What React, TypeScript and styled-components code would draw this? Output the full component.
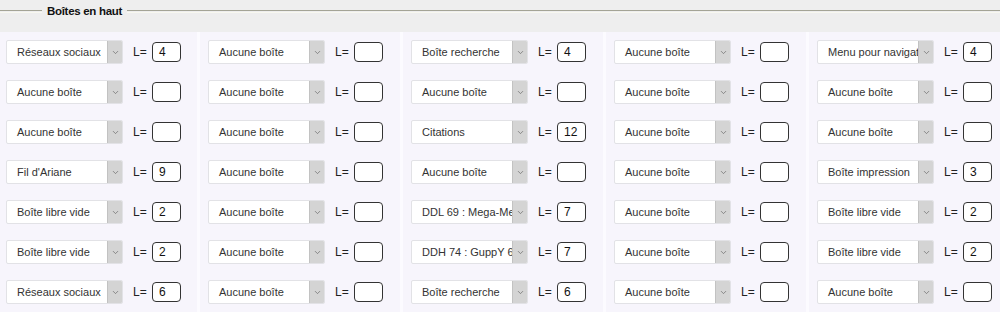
import React, { FC } from 'react'
import styled, { createGlobalStyle } from 'styled-components'
import { ChevronDown } from 'lucide-react'

const GlobalStyle = createGlobalStyle`
    html, body {
        margin: 0;
        padding: 0;
        background: #f7f5fc;
        font-family: "Liberation Sans", Arial, sans-serif;
    }
`

const Panel = styled.section`
    width: 1000px;
    height: 312px;
    overflow: hidden;
`
const Header = styled.div`
    height: 32px;
    background: #eeeeee;
    display: flex;
    align-items: flex-start;
    padding-top: 4px;
    box-sizing: border-box;
`
const Rule = styled.span<{ grow?: boolean }>`
    flex: ${(p) => (p.grow ? '1' : '0 0 42px')};
    height: 1px;
    margin-top: 6px;
    border-top: 1px solid #a4a496;
    border-bottom: 1px solid #f8f8f0;
`
const Legend = styled.span`
    padding: 0 5px;
    font-size: 11.5px;
    font-weight: bold;
    letter-spacing: -0.3px;
    line-height: 14px;
    color: #111;
`
const Grid = styled.div`
    display: grid;
    grid-template-columns: 200px repeat(4, 203px);
`
const Column = styled.div<{ first?: boolean }>`
    display: flex;
    flex-direction: column;
    gap: 16px;
    padding: 8px 0 0 ${(p) => (p.first ? '6px' : '8px')};
    background: #f7f5fc;
    border-right: 3px solid #fcfbff;
    height: 280px;
`
const Row = styled.div`
    display: flex;
    align-items: center;
    height: 24px;
`
const SelectBox = styled.div`
    position: relative;
    width: 117px;
    height: 24px;
    box-sizing: border-box;
    background: #fff;
    border: 1px solid #e2e2e6;
    border-radius: 2px;
    font-size: 11px;
    color: #333;
    display: flex;
    align-items: center;
    overflow: hidden;
`
const SelectText = styled.span`
    padding-left: 10px;
    width: 95px;
    white-space: nowrap;
    overflow: hidden;
`
const Arrow = styled.span`
    position: absolute;
    right: 0;
    top: 0;
    bottom: 0;
    width: 14px;
    background: #d4d4d4;
    border-left: 1px solid #c2c2c2;
    display: flex;
    align-items: center;
    justify-content: center;
    color: #6f6f6f;
`
const Label = styled.span`
    margin-left: 10px;
    font-size: 12px;
    color: #222;
    width: 19px;
`
const LengthInput = styled.div`
    width: 29px;
    height: 20px;
    box-sizing: border-box;
    border: 1px solid #333;
    border-radius: 4px;
    background: #fff;
    font-size: 12px;
    line-height: 18px;
    padding-left: 6px;
    color: #111;
`

type Slot = [string, string?]

const NONE: Slot = ['Aucune boîte']

const columns: Slot[][] = [
    [
        ['Réseaux sociaux', '4'],
        NONE,
        NONE,
        ["Fil d'Ariane", '9'],
        ['Boîte libre vide', '2'],
        ['Boîte libre vide', '2'],
        ['Réseaux sociaux', '6'],
    ],
    [NONE, NONE, NONE, NONE, NONE, NONE, NONE],
    [
        ['Boîte recherche', '4'],
        NONE,
        ['Citations', '12'],
        NONE,
        ['DDL 69 : Mega-Menu', '7'],
        ['DDH 74 : GuppY 6', '7'],
        ['Boîte recherche', '6'],
    ],
    [NONE, NONE, NONE, NONE, NONE, NONE, NONE],
    [
        ['Menu pour navigation', '4'],
        NONE,
        NONE,
        ['Boîte impression', '3'],
        ['Boîte libre vide', '2'],
        ['Boîte libre vide', '2'],
        NONE,
    ],
]

const BoxRow: FC<{ slot: Slot }> = ({ slot }) => (
    <Row>
        <SelectBox>
            <SelectText>{slot[0]}</SelectText>
            <Arrow>
                <ChevronDown size={9} strokeWidth={2} />
            </Arrow>
        </SelectBox>
        <Label>L=</Label>
        <LengthInput>{slot[1] ?? ''}</LengthInput>
    </Row>
)

const App: FC = () => (
    <Panel>
        <GlobalStyle />
        <Header>
            <Rule />
            <Legend>Boîtes en haut</Legend>
            <Rule grow />
        </Header>
        <Grid>
            {columns.map((col, i) => (
                <Column key={i} first={i === 0}>
                    {col.map((slot, j) => (
                        <BoxRow key={j} slot={slot} />
                    ))}
                </Column>
            ))}
        </Grid>
    </Panel>
)

export default App
